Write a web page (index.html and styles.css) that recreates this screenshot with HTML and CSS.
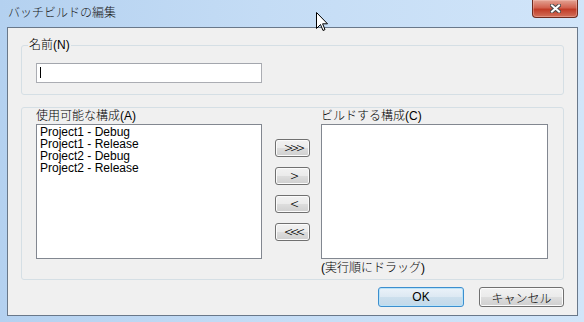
FILE: index.html
```html
<!DOCTYPE html>
<html lang="ja">

<head>
    <meta charset="UTF-8">
    <meta name="viewport" content="width=device-width, initial-scale=1.0">
    <title>バッチビルドの編集</title>
    <link rel="stylesheet" href="styles.css">
</head>

<body>
    <div class="window">
        <div class="titlebar">
            <span class="title">バッチビルドの編集</span>
            <a href="#" class="close">
                <svg width="11" height="9" viewBox="0 0 11 9">
                    <path d="M2 1.5L9 7.5M9 1.5L2 7.5" stroke="#4a4a4a" stroke-width="4" stroke-linecap="square" />
                    <path d="M2 1.5L9 7.5M9 1.5L2 7.5" stroke="#fff" stroke-width="2" stroke-linecap="square" />
                </svg>
            </a>
        </div>
        <div class="client">
            <fieldset class="group name-group">
                <legend>名前(N)</legend>
                <div class="textbox"><span class="caret"></span></div>
            </fieldset>
            <div class="group config-group">
                <div class="col left">
                    <div class="label">使用可能な構成(A)</div>
                    <ul class="listbox">
                        <li>Project1 - Debug</li>
                        <li>Project1 - Release</li>
                        <li>Project2 - Debug</li>
                        <li>Project2 - Release</li>
                    </ul>
                </div>
                <div class="move">
                    <button class="btn small">&gt;&gt;&gt;</button>
                    <button class="btn small">&gt;</button>
                    <button class="btn small">&lt;</button>
                    <button class="btn small">&lt;&lt;&lt;</button>
                </div>
                <div class="col right">
                    <div class="label">ビルドする構成(C)</div>
                    <ul class="listbox"></ul>
                    <div class="hint">(実行順にドラッグ)</div>
                </div>
            </div>
            <div class="footer">
                <button class="btn default ok">OK</button>
                <button class="btn cancel">キャンセル</button>
            </div>
        </div>
        <!-- マウスカーソル -->
        <svg class="cursor" width="12" height="20" viewBox="0 0 12 20">
            <path d="M0.5 0.5V16.5L4.5 12.5L7 18.5L9 17.6L6.6 11.8H11.5Z" fill="#fff" stroke="#000" stroke-width="1" stroke-linejoin="miter" />
        </svg>
    </div>
</body>

</html>
```

FILE: styles.css
```css
* {
    margin: 0;
    padding: 0;
    box-sizing: border-box;
    list-style: none;
}

body {
    width: 584px;
    height: 322px;
    overflow: hidden;
    font-family: "Liberation Sans", "Noto Sans CJK JP", sans-serif;
    font-size: 12px;
    font-weight: 300;
    color: #000;
}

.window {
    position: relative;
    display: flex;
    flex-direction: column;
    width: 584px;
    height: 322px;
    padding: 0 6px 6px 7px;
    background: linear-gradient(90deg, #b4d1f0, #c4dcf5 45%, #d1e5f9 100%);
}

/* タイトルバー */
.titlebar {
    display: flex;
    justify-content: space-between;
    height: 27px;
}

.title {
    padding: 4px 0 0 1px;
    line-height: 16px;
    font-family: "Noto Sans CJK JP", sans-serif;
    font-size: 12px;
    color: #1b1b1b;
}

.close {
    display: flex;
    align-items: center;
    justify-content: center;
    width: 46px;
    height: 18px;
    border: 1px solid #6e2b1f;
    border-top: none;
    border-radius: 0 0 4px 4px;
    background: linear-gradient(#e3a393, #d2624f 45%, #c13c27 55%, #d2705a);
    box-shadow: inset 0 0 0 1px rgba(255, 210, 200, .35);
}

/* クライアント領域 */
.client {
    flex: 1;
    padding: 10px 13px 0 13px;
    border: 1px solid #69788a;
    background: #f0f0f0;
}

.group {
    border: 1px solid #d5dfe5;
    border-radius: 3px;
}

.name-group {
    min-inline-size: 0;
    padding: 0 0 11px 6px;
}

.name-group legend {
    padding: 0 1px;
    line-height: 14px;
}

.textbox {
    width: 226px;
    height: 20px;
    margin: 11px 0 0 8px;
    padding: 3px 0 0 3px;
    border: 1px solid #abadb3;
    border-top-color: #a3a6ad;
    background: #fff;
}

.caret {
    display: block;
    width: 1px;
    height: 11px;
    background: #000;
}

.config-group {
    display: flex;
    height: 173px;
    margin-top: 12px;
    padding: 1px 15px 0 14px;
}

.label,
.hint {
    line-height: 14px;
    white-space: nowrap;
}

.label {
    margin-bottom: 1px;
}

.left {
    width: 226px;
}

.right {
    width: 227px;
    margin-left: 11px;
}

.listbox {
    height: 135px;
    padding: 1px 3px;
    border: 1px solid #828790;
    background: #fff;
    line-height: 12px;
}

.hint {
    margin-top: 2px;
}

.move {
    display: flex;
    flex-direction: column;
    gap: 10px;
    width: 35px;
    margin: 30px 0 0 13px;
}

/* ボタン */
.btn {
    height: 20px;
    border: 1px solid #707070;
    border-radius: 3px;
    background: linear-gradient(#f2f2f2, #ebebeb 48%, #dddddd 52%, #cfcfcf);
    box-shadow: inset 0 0 0 1px #fbfbfb;
    font: inherit;
    color: #000;
    cursor: pointer;
}

.small {
    height: 18px;
    padding-left: 2px;
    font-family: "Noto Sans CJK JP", sans-serif;
    font-size: 15px;
    font-weight: 300;
    letter-spacing: -2px;
    line-height: 16px;
}

.footer {
    display: flex;
    justify-content: flex-end;
    gap: 15px;
    margin-top: 7px;
}

.ok {
    width: 86px;
}

.cancel {
    width: 85px;
}

.default {
    border-color: #3c8fcf;
    background: linear-gradient(#eaf2f9, #dde9f3 48%, #ccdfed 52%, #c2d9ea);
    box-shadow: inset 0 0 0 1px #b9e2f8;
}

.cursor {
    position: absolute;
    left: 316px;
    top: 12px;
}
```
